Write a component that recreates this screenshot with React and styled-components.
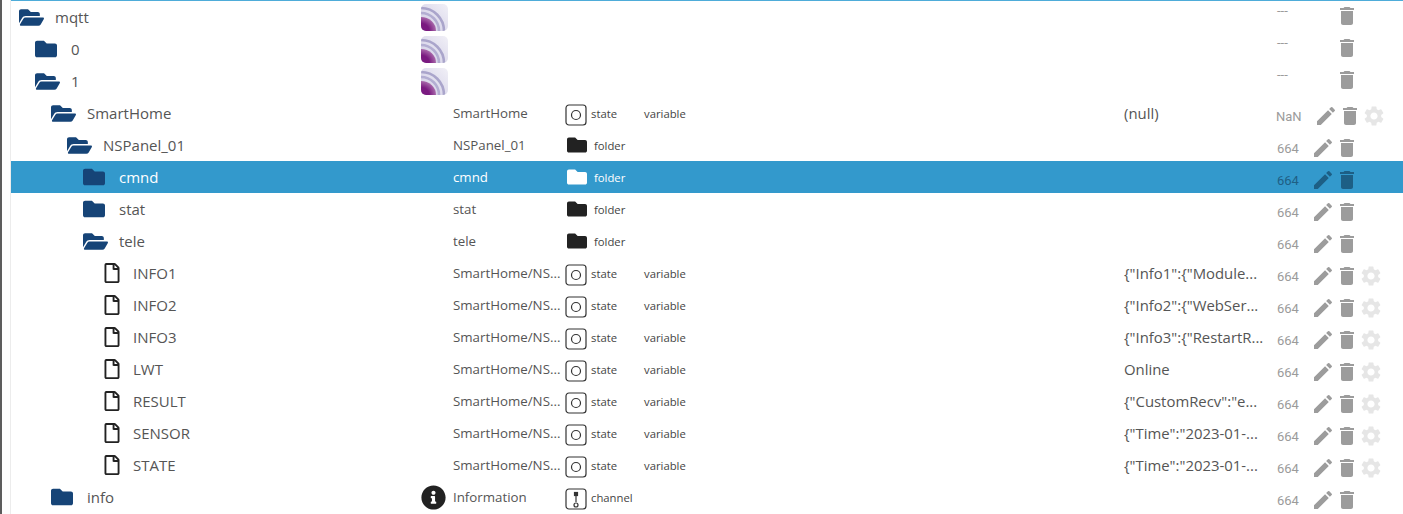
import React from "react";
import styled, { createGlobalStyle } from "styled-components";
import { FaFolder, FaFolderOpen, FaRegFile, FaInfoCircle } from "react-icons/fa";
import { MdEdit, MdDelete, MdSettings } from "react-icons/md";

const GlobalStyle = createGlobalStyle`
  html, body {
    margin: 0;
    background: #fff;
    overflow: hidden;
  }
`;

const Page = styled.div`
  display: flex;
  width: 1403px;
  height: 514px;
  overflow: hidden;
  font-family: "Open Sans", "Noto Sans", sans-serif;
`;

const Gutter = styled.div`
  flex: 0 0 8px;
  border-left: 2px solid #5a5a5a;
  border-right: 1px solid #ececec;
  background: #fcfcfc;
`;

const Tree = styled.div`
  flex: 1;
  min-width: 0;
  border-top: 1px solid #4eacd9;
`;

const Row = styled.div`
  display: grid;
  grid-template-columns: 410px 32px 112px 79px 480px 152px 35px 1fr;
  height: 32px;
  align-items: center;
  background: ${(p) => (p.$selected ? "#3399cc" : "transparent")};
  color: ${(p) => (p.$selected ? "#fff" : "#555")};
`;

const NameCell = styled.div`
  display: flex;
  align-items: center;
  height: 100%;
  padding-left: ${(p) => p.$level * 16 + 8}px;
`;

const IconSlot = styled.div`
  flex: 0 0 36px;
  display: flex;
  align-items: center;
  color: #164477;

  svg {
    display: block;
  }
`;

const FileIconSlot = styled(IconSlot)`
  padding-left: 3px;
  flex-basis: 31px;
  color: #222;
`;

const Name = styled.span`
  font-size: 15px;
`;

const LogoCell = styled.div`
  display: flex;
  align-items: center;
  margin-top: 1px;
`;

const Label = styled.div`
  font-size: 13.3px;
  white-space: nowrap;
  overflow: hidden;
`;

const TypeCell = styled.div`
  display: flex;
  align-items: center;
  gap: 4px;
  font-size: 11.3px;
  padding-left: ${(p) => (p.$folder ? 2 : 0)}px;
  color: ${(p) => (p.$selected ? "#fff" : "#444")};
`;

const TypeFolder = styled.span`
  display: flex;
  width: 23px;
  color: ${(p) => (p.$selected ? "#fff" : "#222")};
`;

const TypeSvg = styled.svg`
  display: block;
  margin-top: 4px;
`;

const Role = styled.div`
  font-size: 11.3px;
  color: #444;
`;

const Value = styled.div`
  font-size: 14.9px;
  white-space: nowrap;
`;

const Mode = styled.div`
  display: flex;
  align-items: center;
  height: 100%;
  padding-left: ${(p) => (p.$shift ? 0 : 1)}px;
`;

const ModeText = styled.span`
  font-family: Roboto, sans-serif;
  font-size: 13px;
  white-space: nowrap;
  margin-top: ${(p) => (p.$dash ? -14 : 6)}px;
  color: ${(p) => (p.$selected ? "#1f5f85" : "#9b9b9b")};
`;

const Actions = styled.div`
  display: flex;
  align-items: center;
  margin-top: ${(p) => (p.$top ? -2 : 6)}px;
  padding-left: ${(p) => (p.$shift ? 3 : 0)}px;
  color: ${(p) => (p.$selected ? "#1d5f85" : "#9c9c9c")};

  svg {
    display: block;
  }
`;

const Blank = styled.span`
  width: 24px;
`;

const Gear = styled(MdSettings)`
  color: #e6e6e6;
`;

const MqttLogo = () => (
  <svg width="27" height="27" viewBox="0 0 27 27">
    <defs>
      <linearGradient id="mqttBg" x1="1" y1="0" x2="0" y2="1">
        <stop offset="0" stopColor="#f1f0f7" />
        <stop offset="1" stopColor="#cfcbe4" />
      </linearGradient>
      <radialGradient id="mqttCore" cx="0" cy="1" r="1">
        <stop offset="0.55" stopColor="#7a1a80" />
        <stop offset="1" stopColor="#a868aa" />
      </radialGradient>
      <clipPath id="mqttClip">
        <rect width="27" height="27" rx="5" />
      </clipPath>
    </defs>
    <g clipPath="url(#mqttClip)">
      <rect width="27" height="27" fill="url(#mqttBg)" />
      <path d="M0 4 A23 23 0 0 1 23 27" fill="none" stroke="#aaa5cb" strokeWidth="2.6" />
      <path d="M0 9 A18 18 0 0 1 18 27" fill="none" stroke="#b3aed2" strokeWidth="2.6" />
      <path d="M0 13 L0 27 L15 27 A15 14 0 0 0 0 13Z" fill="url(#mqttCore)" />
    </g>
  </svg>
);

const StateIcon = ({ channel }) => (
  <TypeSvg width="22" height="22" viewBox="0 0 22 22" fill="none" stroke="#333" strokeWidth="1.2">
    <rect x="1" y="1" width="20" height="20" rx="3" />
    {channel ? (
      <>
        <path d="M11 5 V14" />
        <rect x="9.5" y="4.5" width="3" height="3" fill="#333" />
        <circle cx="11" cy="17" r="2" />
      </>
    ) : (
      <circle cx="11" cy="11" r="4.5" />
    )}
  </TypeSvg>
);

const rows = [
  { name: "mqtt", level: 0, icon: "open", logo: true, mode: "---" },
  { name: "0", level: 1, icon: "closed", logo: true, mode: "---" },
  { name: "1", level: 1, icon: "open", logo: true, mode: "---" },
  { name: "SmartHome", level: 2, icon: "open", label: "SmartHome", type: "state", role: "variable", value: "(null)", mode: "NaN", edit: true, gear: true, shift: true },
  { name: "NSPanel_01", level: 3, icon: "open", label: "NSPanel_01", type: "folder", mode: "664", edit: true },
  { name: "cmnd", level: 4, icon: "closed", label: "cmnd", type: "folder", mode: "664", edit: true, selected: true },
  { name: "stat", level: 4, icon: "closed", label: "stat", type: "folder", mode: "664", edit: true },
  { name: "tele", level: 4, icon: "open", label: "tele", type: "folder", mode: "664", edit: true },
  { name: "INFO1", level: 5, icon: "file", label: "SmartHome/NS...", type: "state", role: "variable", value: '{"Info1":{"Module...', mode: "664", edit: true, gear: true },
  { name: "INFO2", level: 5, icon: "file", label: "SmartHome/NS...", type: "state", role: "variable", value: '{"Info2":{"WebSer...', mode: "664", edit: true, gear: true },
  { name: "INFO3", level: 5, icon: "file", label: "SmartHome/NS...", type: "state", role: "variable", value: '{"Info3":{"RestartR...', mode: "664", edit: true, gear: true },
  { name: "LWT", level: 5, icon: "file", label: "SmartHome/NS...", type: "state", role: "variable", value: "Online", mode: "664", edit: true, gear: true },
  { name: "RESULT", level: 5, icon: "file", label: "SmartHome/NS...", type: "state", role: "variable", value: '{"CustomRecv":"e...', mode: "664", edit: true, gear: true },
  { name: "SENSOR", level: 5, icon: "file", label: "SmartHome/NS...", type: "state", role: "variable", value: '{"Time":"2023-01-...', mode: "664", edit: true, gear: true },
  { name: "STATE", level: 5, icon: "file", label: "SmartHome/NS...", type: "state", role: "variable", value: '{"Time":"2023-01-...', mode: "664", edit: true, gear: true },
  { name: "info", level: 2, icon: "closed", info: true, label: "Information", type: "channel", mode: "664", edit: true },
];

const TreeIcon = ({ icon }) => {
  if (icon === "file") {
    return (
      <FileIconSlot>
        <FaRegFile size={20} />
      </FileIconSlot>
    );
  }
  return (
    <IconSlot>{icon === "open" ? <FaFolderOpen size={25} /> : <FaFolder size={22} />}</IconSlot>
  );
};

const TypeInfo = ({ row }) => {
  if (!row.type) return <TypeCell />;
  if (row.type === "folder") {
    return (
      <TypeCell $folder $selected={row.selected}>
        <TypeFolder $selected={row.selected}>
          <FaFolder size={20} />
        </TypeFolder>
        {row.type}
      </TypeCell>
    );
  }
  return (
    <TypeCell>
      <StateIcon channel={row.type === "channel"} />
      {row.type}
    </TypeCell>
  );
};

export default function App() {
  return (
    <>
      <GlobalStyle />
      <Page>
        <Gutter />
        <Tree>
          {rows.map((row) => (
            <Row key={row.name} $selected={row.selected}>
              <NameCell $level={row.level}>
                <TreeIcon icon={row.icon} />
                <Name>{row.name}</Name>
              </NameCell>
              <LogoCell>
                {row.logo && <MqttLogo />}
                {row.info && <FaInfoCircle size={25} color="#222" />}
              </LogoCell>
              <Label>{row.label}</Label>
              <TypeInfo row={row} />
              <Role>{row.role}</Role>
              <Value>{row.value}</Value>
              <Mode $shift={row.shift}>
                <ModeText $dash={row.mode === "---"} $selected={row.selected}>
                  {row.mode}
                </ModeText>
              </Mode>
              <Actions $shift={row.shift} $selected={row.selected} $top={row.mode === "---"}>
                {row.edit ? <MdEdit size={24} /> : <Blank />}
                <MdDelete size={24} />
                {row.gear && <Gear size={24} />}
              </Actions>
            </Row>
          ))}
        </Tree>
      </Page>
    </>
  );
}
